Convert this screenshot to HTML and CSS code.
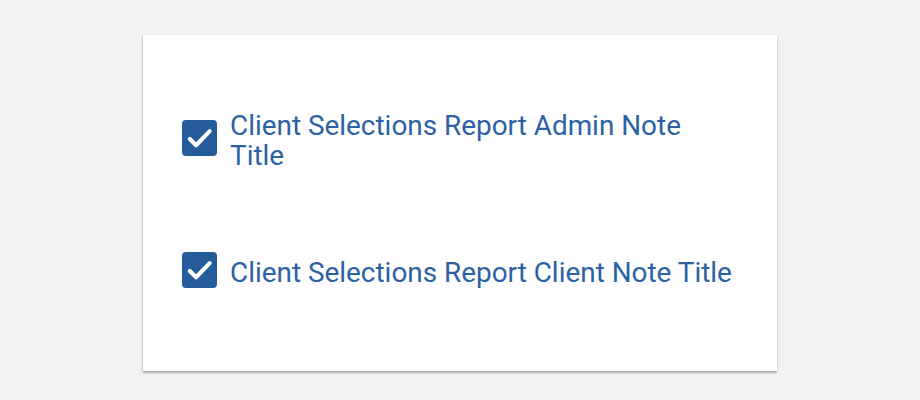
FILE: index.html
```html
<!DOCTYPE html>
<html>
<head>
<meta charset="utf-8">
<link rel="stylesheet" href="styles.css">
</head>
<body>
<div class="card">
  <label class="option option-first">
    <span class="box"><svg viewBox="0 0 36 36" width="36" height="36"><path d="M8 19l6.5 6.5L28.5 11" fill="none" stroke="#fff" stroke-width="4.2" stroke-linecap="round" stroke-linejoin="round"/></svg></span>
    <span class="label">Client Selections Report Admin Note Title</span>
  </label>
  <label class="option option-second">
    <span class="box"><svg viewBox="0 0 36 36" width="36" height="36"><path d="M8 19l6.5 6.5L28.5 11" fill="none" stroke="#fff" stroke-width="4.2" stroke-linecap="round" stroke-linejoin="round"/></svg></span>
    <span class="label">Client Selections Report Client Note Title</span>
  </label>
</div>
</body>
</html>
```
FILE: styles.css
```css
html, body {
  margin: 0;
  padding: 0;
  background: #f2f2f2;
  width: 920px;
  height: 400px;
  overflow: hidden;
}
body {
  padding-top: 35px;
  padding-left: 143px;
  box-sizing: border-box;
  font-family: Roboto, "Liberation Sans", sans-serif;
}
.card {
  width: 634px;
  height: 336px;
  background: #fff;
  box-shadow: 0 2px 2px rgba(0,0,0,0.3), -1px 0 2px rgba(0,0,0,0.06);
  box-sizing: border-box;
  padding-left: 39px;
  padding-top: 74px;
}
.option {
  display: flex;
  align-items: center;
  gap: 13px;
}
.option-second {
  margin-top: 81px;
}
.box {
  flex: none;
  width: 35px;
  height: 36px;
  margin-bottom: 4px;
  border-radius: 4px;
  background: #245c9c;
  display: flex;
  align-items: center;
  justify-content: center;
  overflow: hidden;
}
.label {
  color: #2c62a3;
  font-size: 27.9px;
  line-height: 30px;
  max-width: 505px;
  padding-top: 2px;
}
```
